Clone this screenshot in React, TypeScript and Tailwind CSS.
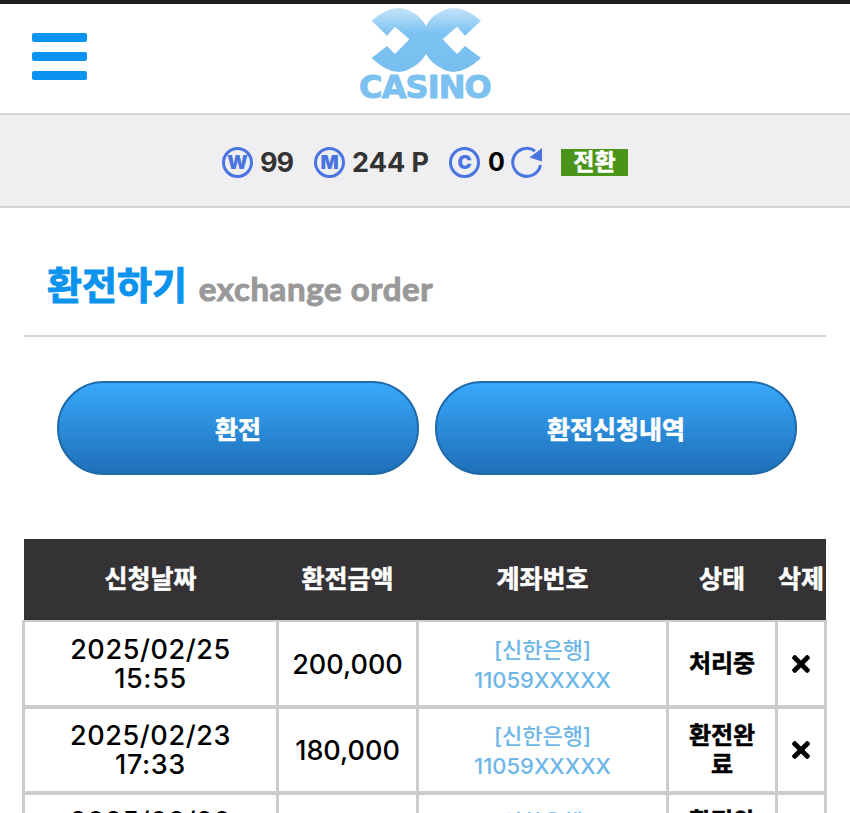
import { FaTimes } from "react-icons/fa";

const FONT = "font-['Inter','Noto_Sans_CJK_KR',sans-serif]";

const Logo: React.FC = () => {
  return (
    <div className="flex w-[140px] flex-col items-center">
      <svg viewBox="0 0 420 210" className="block h-[70px] w-[140px]" aria-hidden>
        <defs>
          <linearGradient id="logo-fill" x1="0" y1="0" x2="0" y2="1">
            <stop offset="0" stopColor="#c4e3f9" />
            <stop offset="0.4" stopColor="#7cc2f2" />
            <stop offset="1" stopColor="#78bff0" />
          </linearGradient>
        </defs>
        <path
          fill="url(#logo-fill)"
          d="M50 50 Q118 -10 172 25 Q198 38 213 66 Q228 38 254 25 Q308 -10 378 50 L330 95 L306 68 L263 106 L306 150 L330 126 L378 162 Q308 228 254 190 Q228 176 213 150 Q198 176 172 190 Q118 228 50 162 L96 126 L120 150 L163 106 L120 68 L96 95 Z"
        />
      </svg>
      <span className="-mt-[2px] font-['DejaVu_Sans',sans-serif] text-[32px] leading-[30px] font-bold tracking-[-0.9px] text-[#7cc1f0] [-webkit-text-stroke:1px_#7cc1f0]">
        CASINO
      </span>
    </div>
  );
};

const Header: React.FC = () => {
  return (
    <header className="grid h-[111px] grid-cols-[1fr_auto_1fr] border-b-2 border-[#d6d6d8] bg-white">
      <div className="flex flex-col gap-[10px] pt-[29px] pl-8">
        <span className="h-[9px] w-[55px] rounded-[2px] bg-[#0b93f3]" />
        <span className="h-[9px] w-[55px] rounded-[2px] bg-[#0b93f3]" />
        <span className="h-[9px] w-[55px] rounded-[2px] bg-[#0b93f3]" />
      </div>
      <Logo />
    </header>
  );
};

type RingProps = {
  letter: string;
};
const Ring: React.FC<RingProps> = ({ letter }) => {
  return (
    <span className="flex h-[31px] w-[31px] items-center justify-center rounded-full border-[3px] border-[#4a74e0] text-[19px] leading-none font-black text-[#4a74e0]">
      {letter}
    </span>
  );
};

const Refresh: React.FC = () => {
  return (
    <svg viewBox="0 0 32 32" className="h-8 w-8" fill="none" aria-hidden>
      <path
        d="M24 5 A14 14 0 1 0 29.5 19"
        stroke="#4a74e0"
        strokeWidth="3"
      />
      <path d="M18.5 11.5 L31 2 L31 15.5 Z" fill="#4a74e0" />
    </svg>
  );
};

const PointsBar: React.FC = () => {
  return (
    <div className="flex h-[93px] items-center justify-center border-b-2 border-[#d6d6d8] bg-[#efeff1] pt-[3px] text-[27px] leading-none font-bold text-[#333]">
      <Ring letter="W" />
      <span className="ml-[7px] tracking-[-1px]">99</span>
      <span className="ml-[21px]">
        <Ring letter="M" />
      </span>
      <span className="ml-[7px]">244 P</span>
      <span className="ml-5">
        <Ring letter="C" />
      </span>
      <span className="ml-2 text-[25px] text-black">0</span>
      <span className="ml-[6px]">
        <Refresh />
      </span>
      <span className="ml-[18px] flex h-[27px] w-[67px] items-center justify-center bg-[#4a9419] text-[23px] font-bold text-white [-webkit-text-stroke:0.5px_white]">
        전환
      </span>
    </div>
  );
};

const Title: React.FC = () => {
  return (
    <div className="mx-6 flex h-[129px] items-end border-b-2 border-[#d4d4d6] pb-[27px] pl-[23px]">
      <h1 className="text-[38px] leading-[46px] font-bold text-[#0b93ee] [-webkit-text-stroke:1px_#0b93ee]">
        환전하기
      </h1>
      <span className="ml-3 font-['Lato',sans-serif] text-[33px] leading-[40px] font-bold tracking-[0.6px] text-[#999] [-webkit-text-stroke:1px_#999]">
        exchange order
      </span>
    </div>
  );
};

type PillProps = {
  label: string;
};
const Pill: React.FC<PillProps> = ({ label }) => {
  return (
    <button className="flex h-[94px] flex-1 items-center justify-center rounded-[47px] border-2 border-[#1e69a8] bg-gradient-to-b from-[#39a8fb] to-[#1f70b8] pt-[5px] text-[25px] font-bold text-white [-webkit-text-stroke:0.6px_white]">
      {label}
    </button>
  );
};

type Order = {
  date: string;
  time: string;
  amount: string;
  status: string;
};

const orders: readonly Order[] = [
  { date: "2025/02/25", time: "15:55", amount: "200,000", status: "처리중" },
  { date: "2025/02/23", time: "17:33", amount: "180,000", status: "환전완료" },
  { date: "2025/02/20", time: "12:10", amount: "150,000", status: "환전완료" },
];

const columns = ["신청날짜", "환전금액", "계좌번호", "상태", "삭제"] as const;

const OrderTable: React.FC = () => {
  const td =
    "border-x-[3px] border-y-4 border-[#cdcbce] text-center align-middle [tr:first-child_&]:border-t-2";
  return (
    <table className="ml-[22px] w-[802px] table-fixed border-collapse">
      <colgroup>
        <col className="w-[254px]" />
        <col className="w-[140px]" />
        <col className="w-[250px]" />
        <col className="w-[109px]" />
        <col className="w-[49px]" />
      </colgroup>
      <thead>
        <tr className="h-[82px] bg-[#343234] text-[25px] text-white">
          {columns.map((c) => (
            <th
              key={c}
              className="whitespace-nowrap font-bold [-webkit-text-stroke:0.5px_white]"
            >
              {c}
            </th>
          ))}
        </tr>
      </thead>
      <tbody>
        {orders.map((o) => (
          <tr key={o.date} className="h-[86px]">
            <td className={`${td} text-[27px] leading-[29px] font-medium tracking-[0.6px] text-black`}>
              {o.date}
              <br />
              {o.time}
            </td>
            <td className={`${td} pt-[3px] text-[27px] font-medium text-black`}>{o.amount}</td>
            <td className={`${td} pt-[2px] text-[22px] leading-[30px] font-medium text-[#6db6e8]`}>
              [신한은행]
              <br />
              11059XXXXX
            </td>
            <td className={`${td} px-3 text-[24px] leading-[29px] font-bold text-black [-webkit-text-stroke:0.5px_black]`}>
              {o.status}
            </td>
            <td className={`${td} text-black`}>
              <FaTimes className="mx-auto h-[26px] w-[22px]" />
            </td>
          </tr>
        ))}
      </tbody>
    </table>
  );
};

export default function App() {
  return (
    <div className={`h-[813px] w-[850px] overflow-hidden bg-white ${FONT}`}>
      <div className="h-1 bg-[#1e1e1e]" />
      <Header />
      <PointsBar />
      <Title />
      <div className="flex gap-4 pt-11 pr-[53px] pb-16 pl-[57px]">
        <Pill label="환전" />
        <Pill label="환전신청내역" />
      </div>
      <OrderTable />
    </div>
  );
}
